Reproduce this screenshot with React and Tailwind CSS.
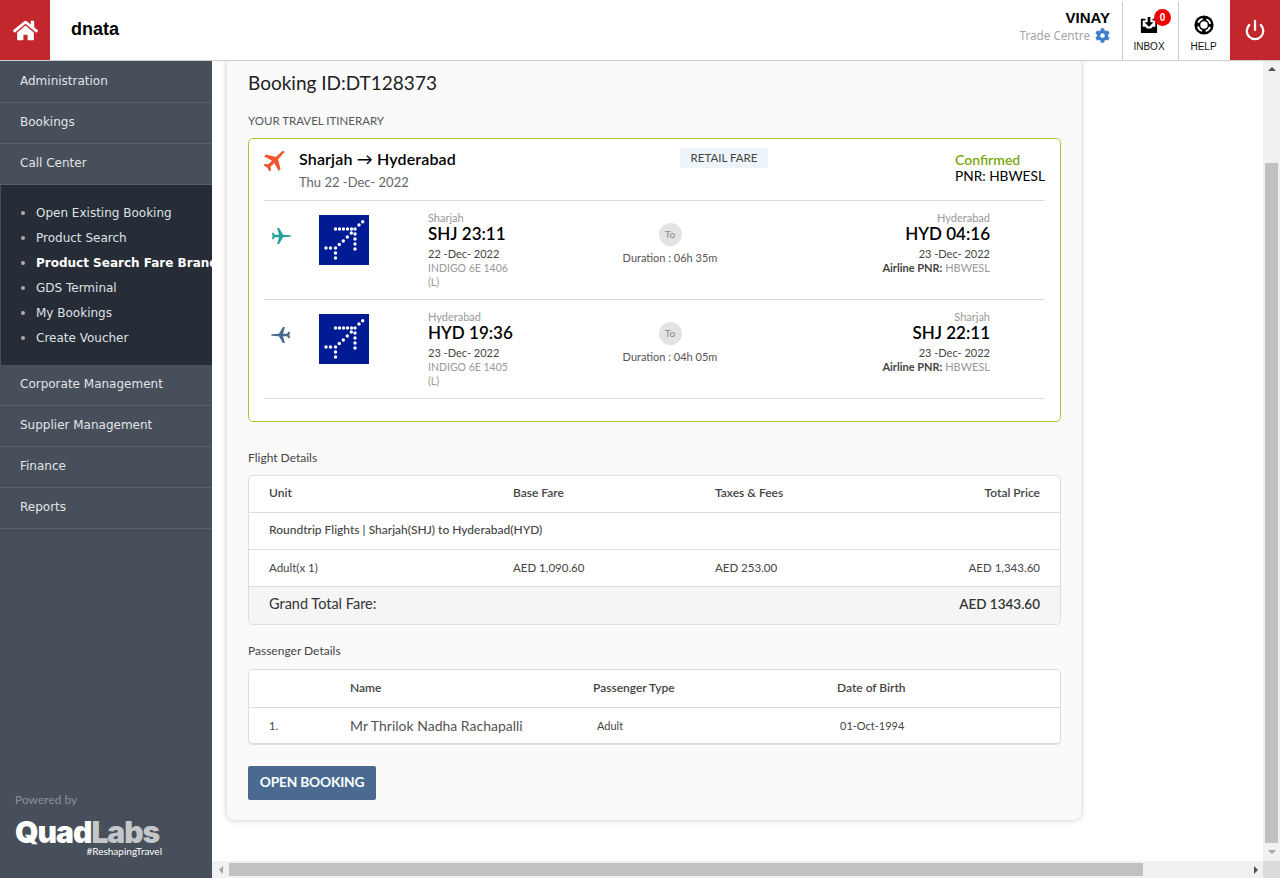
import React from "react";
import { FaHome, FaCog } from "react-icons/fa";
import { Power } from "lucide-react";

const sans = "font-['Lato','Open_Sans',sans-serif]";

function InboxIcon() {
  return (
    <svg width="18" height="18" viewBox="0 0 20 20" aria-hidden="true">
      <path d="M1 3h5v2H3v7h3l1.500 2h5L14 12h3V5h-3V3h5v16H1z" fill="#000" />
      <path d="M8.500 1h3v6H15l-5 5-5-5h3.500z" fill="#000" />
    </svg>
  );
}

function LifeRing() {
  return (
    <svg width="20" height="20" viewBox="0 0 24 24" aria-hidden="true">
      <circle cx="12" cy="12" r="11.500" fill="#000" />
      <circle cx="12" cy="12" r="7.500" fill="none" stroke="#fff" strokeWidth="2.200" pathLength="100" strokeDasharray="15 10" strokeDashoffset="-5" />
      <circle cx="12" cy="12" r="4.500" fill="#fff" />
    </svg>
  );
}

function Plane({ className }) {
  return (
    <svg viewBox="0 0 24 24" className={className} fill="currentColor" aria-hidden="true">
      <path d="M23.500 11L14.500 10.500 9.700 2.500H7.300L9.600 10.500H4.800L2.800 8H1L2 12 1 16H2.800L4.800 13.500H9.600L7.300 21.500H9.700L14.500 13.500 23.500 13Z" />
    </svg>
  );
}

function IndigoLogo() {
  const dots = [
    [43.7, 6.7], [40, 10], [36, 14], [32.3, 18], [28.3, 22], [24.300, 26], [20.300, 29.500], [16.500, 33],
    [16.500, 14], [20.500, 14], [24.500, 14], [28.500, 14], [32.500, 14],
    [36, 19], [36, 24], [36, 29], [36, 34],
    [7, 33], [11.500, 33], [16.500, 38], [16.500, 43],
  ];
  return (
    <svg width="50" height="50" viewBox="0 0 50 50" className="shrink-0" aria-hidden="true">
      <rect width="50" height="50" fill="#001b94" />
      {dots.map(([x, y], i) => (
        <circle key={i} cx={x} cy={y} r="1.700" fill="#fff" />
      ))}
    </svg>
  );
}

function Leg({ icon, from, fromTime, date1, flight, to, toTime, date2, dur }) {
  return (
    <div className="h-[99px] border-b border-[#dddddd] flex">
      <div className="w-[55px] pt-[25px] pl-[7px]">{icon}</div>
      <div className="w-[109px] pt-[14px]"><IndigoLogo /></div>
      <div className="w-[196px] pt-[10px]">
        <div className="text-[11px] leading-[13px] text-[#999999]">{from}</div>
        <div className="text-[17px] leading-[20px] text-black font-semibold">{fromTime}</div>
        <div className="text-[11px] leading-[14px] mt-[3px] text-[#444444]">{date1}</div>
        <div className="text-[10.500px] leading-[14px] text-[#999999]">{flight}</div>
        <div className="text-[10.500px] leading-[14px] text-[#999999]">(L)</div>
      </div>
      <div className="w-[92px] pt-[22px] flex flex-col items-center">
        <div className="w-[23px] h-[23px] rounded-full bg-[#e3e3e3] text-[#888888] text-[10px] flex items-center justify-center">To</div>
        <div className="text-[11px] leading-[14px] mt-[5px] text-[#555555] whitespace-nowrap">{dur}</div>
      </div>
      <div className="flex-1 pt-[10px] pr-[55px] text-right">
        <div className="text-[11px] leading-[13px] text-[#999999]">{to}</div>
        <div className="text-[17px] leading-[20px] text-black font-semibold">{toTime}</div>
        <div className="text-[11px] leading-[14px] mt-[3px] text-[#444444]">{date2}</div>
        <div className="text-[11px] leading-[14px] text-[#999999] whitespace-nowrap"><span className="font-bold text-[#444444]">Airline PNR:</span> HBWESL</div>
      </div>
    </div>
  );
}

const navTop = ["Administration", "Bookings", "Call Center"];
const navBottom = ["Corporate Management", "Supplier Management", "Finance", "Reports"];
const sub = ["Open Existing Booking", "Product Search", "Product Search Fare Brand", "GDS Terminal", "My Bookings", "Create Voucher"];

function NavItem({ label }) {
  return (
    <div className="h-[41px] border-b border-[#5a616c] pl-5 pb-[2px] flex items-center text-[12px] text-[#e2e4e7] font-['DejaVu_Sans',sans-serif]">
      {label}
    </div>
  );
}

export default function App() {
  return (
    <div className={`w-[1280px] h-[878px] flex flex-col overflow-hidden bg-white ${sans}`}>
      <header className="h-[61px] shrink-0 border-b border-[#cccccc] flex bg-white relative z-10">
        <div className="w-[50px] bg-[#c1272d] flex items-center justify-center">
          <FaHome className="text-white text-[25px]" />
        </div>
        <div className="ml-[21px] self-center font-['Liberation_Sans',sans-serif] text-[18px] font-bold text-black mb-[2px]">dnata</div>
        <div className="ml-auto flex">
          <div className="pr-3 pt-[9px] text-right font-['Liberation_Sans',sans-serif]">
            <div className="text-[15px] leading-[17px] font-bold text-black">VINAY</div>
            <div className="flex items-center justify-end gap-[5px] mt-[1px] text-[11.700px] text-[#a5a5a5] font-['Noto_Sans',sans-serif]">
              Trade Centre <FaCog className="text-[#3f80c9] text-[15px]" />
            </div>
          </div>
          <div className="w-[56px] mt-[2px] border-l border-[#cccccc] pr-[3px] flex flex-col items-center pt-[14px] relative">
            <InboxIcon />
            <span className="absolute top-[7px] left-[31px] w-[17px] h-[17px] rounded-full bg-[#f00000] text-white text-[10px] font-bold flex items-center justify-center font-['Liberation_Sans',sans-serif]">0</span>
            <span className="text-[10px] leading-[12px] mt-[7px] text-[#111111] font-['Liberation_Sans',sans-serif]">INBOX</span>
          </div>
          <div className="w-[52px] mt-[2px] border-l border-[#cccccc] pr-[2px] flex flex-col items-center pt-[13px]">
            <LifeRing />
            <span className="text-[10px] leading-[12px] mt-[6px] text-[#111111] font-['Liberation_Sans',sans-serif]">HELP</span>
          </div>
          <div className="w-[50px] bg-[#c1272d] flex items-center justify-center">
            <Power className="text-white" size={22} strokeWidth={2.500} />
          </div>
        </div>
      </header>

      <div className="flex-1 flex min-h-0">
        <aside className="w-[212px] shrink-0 bg-[#474f5a] pt-[1px] flex flex-col overflow-hidden">
          {navTop.map((l) => <NavItem key={l} label={l} />)}
          <ul className="h-[180px] shrink-0 bg-[#272d37] pt-[15px] border-l border-[#474f5a] overflow-hidden">
            {sub.map((s, i) => (
              <li key={s} className={`h-[25px] flex items-center pl-[20px] whitespace-nowrap text-[12px] font-['DejaVu_Sans',sans-serif] ${i === 2 ? "font-bold text-white" : "text-[#dfe1e4]"}`}>
                <span className="w-[4px] h-[4px] rounded-full bg-[#a9adb3] mr-[11px] shrink-0" />
                {s}
              </li>
            ))}
          </ul>
          {navBottom.map((l) => <NavItem key={l} label={l} />)}
          <div className="mt-auto pl-[15px] pb-[22px]">
            <div className="text-[12px] leading-[16px] text-[#8b9199] mb-[11px]">Powered by</div>
            <div className="text-[30px] leading-[27px] font-black tracking-[-1px] text-white font-['Inter',sans-serif]">Quad<span className="text-[#c4c6c9]">Labs</span></div>
            <div className="text-[10px] leading-[10px] text-white w-[147px] text-right">#ReshapingTravel</div>
          </div>
        </aside>

        <div className="flex-1 flex flex-col min-w-0">
          <div className="flex-1 flex min-h-0">
            <main className="flex-1 overflow-hidden pl-[15px]">
              <div className="w-[854px] -mt-[10px] h-[769px] bg-[#fafafa] rounded-b-[8px] shadow-[0_0_6px_rgba(0,0,0,0.22)] pl-[21px] pr-[20px] text-[#333333]">
                <div className="pt-[19px] text-[19px] leading-[26px] text-[#222222]">Booking ID:DT128373</div>
                <div className="mt-[18px] text-[11.500px] leading-[14px] text-[#555555]">YOUR TRAVEL ITINERARY</div>
                <section className="mt-[10px] h-[284px] bg-white border border-[#a4c639] rounded-[5px] px-[15px]">
                  <div className="h-[62px] border-b border-[#dddddd] flex relative">
                    <Plane className="w-[26px] h-[26px] text-[#f0532d] -rotate-45 mt-[8px] -ml-[2px] shrink-0" />
                    <div className="ml-[11px] pt-[11px]">
                      <div className="text-[16px] leading-[18px] font-semibold text-black tracking-[0.15px]">Sharjah → Hyderabad</div>
                      <div className="text-[13px] leading-[16px] mt-[6px] text-[#666666]">Thu 22 -Dec- 2022</div>
                    </div>
                    <div className="absolute left-[416px] top-[9px] w-[88px] h-[20px] bg-[#edf4fb] flex items-center justify-center text-[11.500px] text-[#444444]">RETAIL FARE</div>
                    <div className="ml-auto pt-[13px] w-[90px]">
                      <div className="text-[14px] leading-[16px] font-semibold text-[#7aa80f]">Confirmed</div>
                      <div className="text-[13.700px] leading-[16px] text-black whitespace-nowrap">PNR: HBWESL</div>
                    </div>
                  </div>
                  <Leg
                    icon={<Plane className="w-[20px] h-[20px] text-[#2aa198]" />}
                    from="Sharjah" fromTime="SHJ 23:11" date1="22 -Dec- 2022" flight="INDIGO 6E 1406"
                    to="Hyderabad" toTime="HYD 04:16" date2="23 -Dec- 2022" dur="Duration : 06h 35m"
                  />
                  <Leg
                    icon={<Plane className="w-[20px] h-[20px] text-[#4a6b8f] rotate-180" />}
                    from="Hyderabad" fromTime="HYD 19:36" date1="23 -Dec- 2022" flight="INDIGO 6E 1405"
                    to="Sharjah" toTime="SHJ 22:11" date2="23 -Dec- 2022" dur="Duration : 04h 05m"
                  />
                </section>

                <div className="mt-[29px] text-[12px] leading-[14px] text-[#444444]">Flight Details</div>
                <div className="mt-[10px] h-[150px] border border-[#dddddd] rounded-[5px] bg-white overflow-hidden text-[11.500px] text-[#444444]">
                  <div className="h-[37px] border-b border-[#dddddd] px-5 pb-[2px] grid grid-cols-[244px_202px_1fr_auto] items-center font-semibold text-[12px]">
                    <span>Unit</span><span>Base Fare</span><span>Taxes &amp; Fees</span><span>Total Price</span>
                  </div>
                  <div className="h-[37px] border-b border-[#dddddd] px-5 pb-[2px] flex items-center font-medium text-[12px]">
                    Roundtrip Flights | Sharjah(SHJ) to Hyderabad(HYD)
                  </div>
                  <div className="h-[37px] border-b border-[#dddddd] px-5 grid grid-cols-[244px_202px_1fr_auto] items-center">
                    <span>Adult(x 1)</span><span>AED 1,090.60</span><span>AED 253.00</span><span>AED 1,343.60</span>
                  </div>
                  <div className="h-[37px] bg-[#f5f5f5] px-5 pb-[3px] flex items-center justify-between text-[14.500px] text-[#333333]">
                    <span>Grand Total Fare:</span><span className="font-semibold text-[13.500px]">AED 1343.60</span>
                  </div>
                </div>

                <div className="mt-[19px] text-[12px] leading-[14px] text-[#444444]">Passenger Details</div>
                <div className="mt-[11px] h-[76px] border border-[#dddddd] border-b-2 rounded-[5px] bg-white text-[11.500px] text-[#444444]">
                  <div className="h-[38px] border-b border-[#dddddd] px-5 pb-[2px] grid grid-cols-[81px_243px_244px_1fr] items-center font-semibold text-[12px]">
                    <span></span><span>Name</span><span>Passenger Type</span><span>Date of Birth</span>
                  </div>
                  <div className="h-[36px] px-5 grid grid-cols-[81px_247px_243px_1fr] items-center text-[11px]">
                    <span>1.</span><span className="text-[14px] text-[#555555] mb-[2px]">Mr Thrilok Nadha Rachapalli</span><span>Adult</span><span>01-Oct-1994</span>
                  </div>
                </div>

                <button className="mt-[21px] w-[128px] h-[34px] bg-[#4a6b8f] rounded-[2px] text-white text-[13.750px] pb-[2px] font-bold tracking-[-0.2px]">OPEN BOOKING</button>
              </div>
            </main>

            <div className="w-[17px] shrink-0 bg-[#f1f1f1] flex flex-col items-center">
              <div className="h-[16px] flex items-center justify-center">
                <div className="w-0 h-0 border-x-[4px] border-x-transparent border-b-[4px] border-b-[#505050]" />
              </div>
              <div className="h-[86px]" />
              <div className="w-[13px] flex-1 bg-[#c1c1c1]" />
              <div className="h-[18px] flex items-center justify-center">
                <div className="w-0 h-0 border-x-[4px] border-x-transparent border-t-[4px] border-t-[#a3a3a3]" />
              </div>
            </div>
          </div>

          <div className="h-[17px] shrink-0 flex bg-[#f1f1f1]">
            <div className="w-[17px] flex items-center justify-center">
              <div className="w-0 h-0 border-y-[4px] border-y-transparent border-r-[4px] border-r-[#a3a3a3]" />
            </div>
            <div className="w-[914px] mt-[2px] mb-[2px] bg-[#c1c1c1]" />
            <div className="flex-1 flex items-center justify-end pr-[5px]">
              <div className="w-0 h-0 border-y-[4px] border-y-transparent border-l-[4px] border-l-[#505050]" />
            </div>
            <div className="w-[17px] bg-[#dcdcdc]" />
          </div>
        </div>
      </div>
    </div>
  );
}
